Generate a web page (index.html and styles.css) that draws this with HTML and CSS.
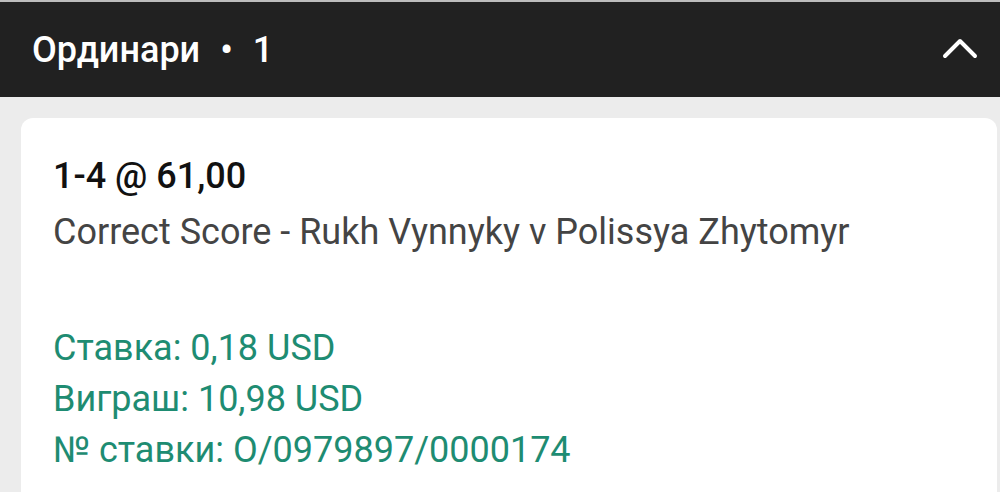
FILE: index.html
```html
<!DOCTYPE html>
<html lang="uk">
<head>
<meta charset="utf-8">
<link rel="stylesheet" href="styles.css">
</head>
<body>
<div class="topline"></div>
<header class="bar">
  <span class="bar-title">Ординари <span class="dot">•</span> 1</span>
  <svg class="chev" width="36" height="22" viewBox="0 0 36 22"><path d="M3 18 L18 3 L33 18" fill="none" stroke="#fff" stroke-width="4" stroke-linecap="round" stroke-linejoin="round"/></svg>
</header>
<main class="content">
  <section class="card">
    <div class="pick">1-4 @ 61,00</div>
    <div class="market">Correct Score - Rukh Vynnyky v Polissya Zhytomyr</div>
    <div class="details">
      <div class="line">Ставка: 0,18 USD</div>
      <div class="line">Виграш: 10,98 USD</div>
      <div class="line">№ ставки: O/0979897/0000174</div>
    </div>
  </section>
</main>
</body>
</html>
```
FILE: styles.css
```css
* { box-sizing: border-box; }
html, body { margin: 0; padding: 0; }
body {
  width: 1000px;
  height: 492px;
  overflow: hidden;
  background: #ececec;
  font-family: Roboto, "Noto Sans", sans-serif;
}
.topline { height: 2px; background: #bdbdbd; }
.bar {
  height: 95px;
  background: #212121;
  display: flex;
  align-items: center;
  justify-content: space-between;
  padding: 0 22px 0 32px;
}
.bar-title {
  color: #fff;
  font-size: 36px;
  font-weight: 500;
}
.dot { margin: 0 11px; }
.chev { display: block; margin-top: -2px; }
.content { padding: 21px 3px 0 21px; }
.card {
  background: #fff;
  border-radius: 12px;
  height: 420px;
  padding: 30px 32px 0 32px;
}
.pick {
  font-size: 36px;
  font-weight: 500;
  color: #111;
  line-height: 56px;
}
.market {
  font-size: 36px;
  color: #444;
  line-height: 56px;
}
.details { margin-top: 63px; }
.line {
  font-size: 36px;
  color: #1e8c72;
  line-height: 51px;
}
```
